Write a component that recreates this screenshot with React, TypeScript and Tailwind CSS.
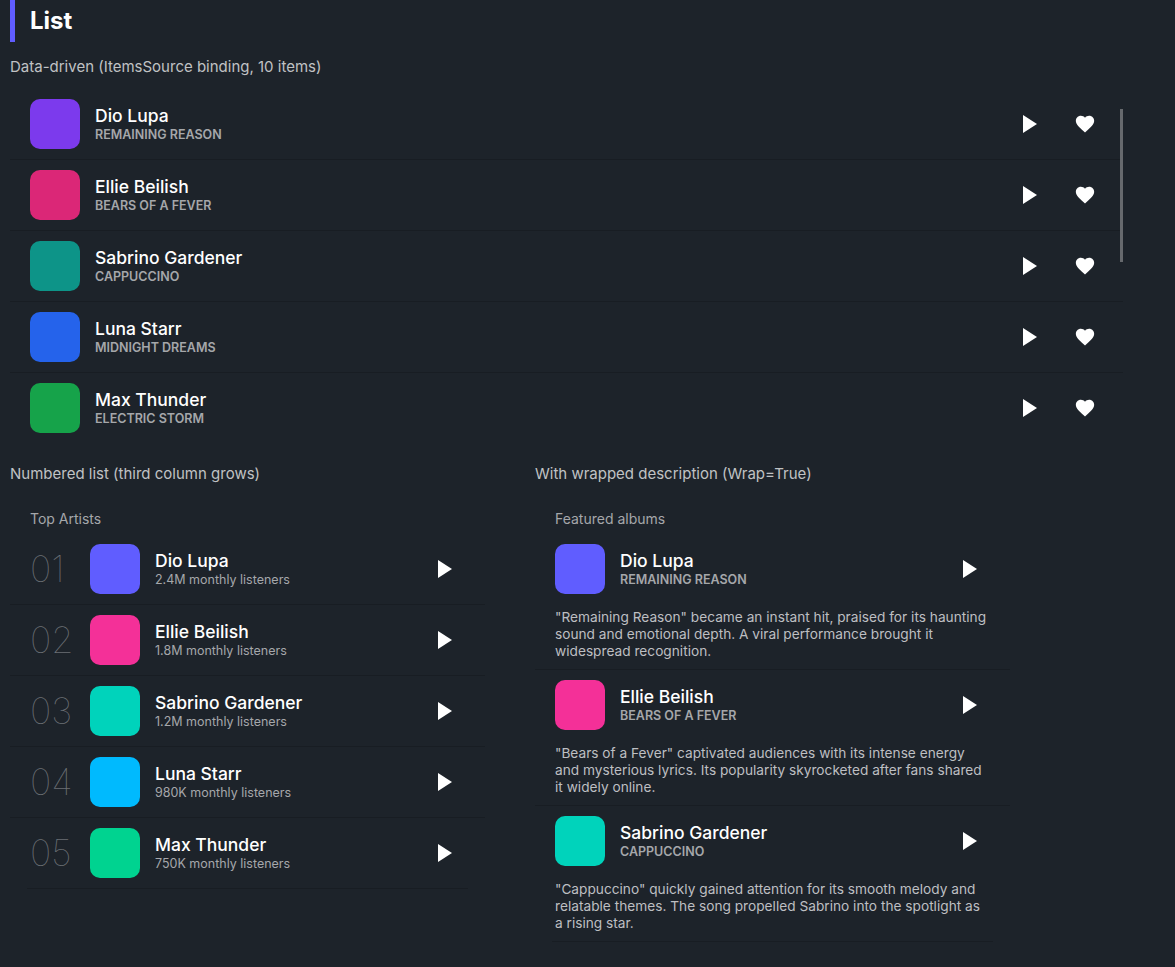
import React from 'react'

const tracks = [
  { name: 'Dio Lupa', song: 'REMAINING REASON', color: 'bg-[#7c3aed]' },
  { name: 'Ellie Beilish', song: 'BEARS OF A FEVER', color: 'bg-[#db2777]' },
  { name: 'Sabrino Gardener', song: 'CAPPUCCINO', color: 'bg-[#0d9488]' },
  { name: 'Luna Starr', song: 'MIDNIGHT DREAMS', color: 'bg-[#2563eb]' },
  { name: 'Max Thunder', song: 'ELECTRIC STORM', color: 'bg-[#16a34a]' },
]

const artists = [
  { no: '01', name: 'Dio Lupa', sub: '2.4M monthly listeners', color: 'bg-[#605dff]' },
  { no: '02', name: 'Ellie Beilish', sub: '1.8M monthly listeners', color: 'bg-[#f43098]' },
  { no: '03', name: 'Sabrino Gardener', sub: '1.2M monthly listeners', color: 'bg-[#00d3bb]' },
  { no: '04', name: 'Luna Starr', sub: '980K monthly listeners', color: 'bg-[#00bafe]' },
  { no: '05', name: 'Max Thunder', sub: '750K monthly listeners', color: 'bg-[#00d390]' },
]

const albums = [
  {
    name: 'Dio Lupa',
    song: 'REMAINING REASON',
    color: 'bg-[#605dff]',
    text: '"Remaining Reason" became an instant hit, praised for its haunting sound and emotional depth. A viral performance brought it widespread recognition.',
  },
  {
    name: 'Ellie Beilish',
    song: 'BEARS OF A FEVER',
    color: 'bg-[#f43098]',
    text: '"Bears of a Fever" captivated audiences with its intense energy and mysterious lyrics. Its popularity skyrocketed after fans shared it widely online.',
  },
  {
    name: 'Sabrino Gardener',
    song: 'CAPPUCCINO',
    color: 'bg-[#00d3bb]',
    text: '"Cappuccino" quickly gained attention for its smooth melody and relatable themes. The song propelled Sabrino into the spotlight as a rising star.',
  },
]

function Play() {
  return (
    <svg width="14" height="18" viewBox="0 0 14 18" className="block shrink-0">
      <polygon points="0,0 14,9 0,18" fill="#fff" />
    </svg>
  )
}

function Heart() {
  return (
    <svg width="22" height="22" viewBox="0 0 24 24" className="block shrink-0">
      <path
        fill="#fff"
        d="M12 21.35l-1.45-1.32C5.4 15.36 2 12.28 2 8.5 2 5.42 4.42 3 7.5 3c1.74 0 3.41.81 4.5 2.09C13.09 3.81 14.76 3 16.5 3 19.58 3 22 5.42 22 8.5c0 3.78-3.4 6.86-8.55 11.54L12 21.35z"
      />
    </svg>
  )
}

function Titles({ name, sub, caps }: { name: string; sub: string; caps?: boolean }) {
  return (
    <div className="-mt-[1px] flex flex-col">
      <div className="text-[17.5px] leading-[21px] font-medium text-white">{name}</div>
      <div className={caps ? 'mt-[1px] text-[12.5px] leading-[15px] font-semibold text-[#a5a7aa]' : 'mt-[1px] text-[12.5px] leading-[15px] text-[#a5a7aa]'}>{sub}</div>
    </div>
  )
}

export default function App() {
  return (
    <div className="min-h-[967px] bg-[#1d232a] pl-[10px] font-['Inter',sans-serif] text-[#a5a7aa]">
      <div className="h-[42px] border-l-[5px] border-[#605dff] pl-[15px]">
        <h1 className="text-[24px] leading-[42px] font-bold text-white">List</h1>
      </div>

      <p className="mt-[15px] text-[15px] leading-[20px] text-[#c0c2c4]">Data-driven (ItemsSource binding, 10 items)</p>

      {/* Data driven list */}
      <div className="relative mt-[12px] h-[354px] w-[1113px] overflow-hidden">
        {tracks.map((t) => (
          <div key={t.name} className="flex h-[71px] items-center border-b border-[#181d23] pl-[20px]">
            <div className={`h-[50px] w-[50px] shrink-0 rounded-[10px] ${t.color}`} />
            <div className="ml-[15px] flex-1">
              <Titles name={t.name} sub={t.song} caps />
            </div>
            <Play />
            <div className="ml-[37px] mr-[27px]">
              <Heart />
            </div>
          </div>
        ))}
        <div className="absolute top-[20px] right-0 h-[153px] w-[3px] bg-[#66696d]" />
      </div>

      <div className="mt-[21px] flex gap-[50px]">
        {/* Numbered list */}
        <div className="w-[475px]">
          <p className="text-[15px] leading-[20px] text-[#c0c2c4]">Numbered list (third column grows)</p>
          <p className="mt-[25px] pl-[20px] text-[14px] leading-[20px] text-[#a5a7aa]">Top Artists</p>
          <div className="mt-[5px]">
            {artists.map((a, i) => (
              <div key={a.no}>
                <div className="flex h-[70px] items-center pl-[20px]">
                  <div className="w-[60px] shrink-0 text-[36px] leading-[40px] font-thin text-[#6b6f74]">{a.no}</div>
                  <div className={`h-[50px] w-[50px] shrink-0 rounded-[10px] ${a.color}`} />
                  <div className="ml-[15px] flex-1">
                    <Titles name={a.name} sub={a.sub} />
                  </div>
                  <div className="mr-[33px]">
                    <Play />
                  </div>
                </div>
                <div className={i === artists.length - 1 ? 'mx-[17px] h-px bg-[#181d23]' : 'h-px bg-[#181d23]'} />
              </div>
            ))}
          </div>
        </div>

        {/* Wrapped description */}
        <div className="w-[475px]">
          <p className="text-[15px] leading-[20px] text-[#c0c2c4]">With wrapped description (Wrap=True)</p>
          <p className="mt-[25px] pl-[20px] text-[14px] leading-[20px] text-[#a5a7aa]">Featured albums</p>
          <div className="mt-[5px]">
            {albums.map((a, i) => (
              <div key={a.name}>
                <div className="px-[20px] pt-[10px] pb-[9px]">
                  <div className="flex items-center">
                    <div className={`h-[50px] w-[50px] shrink-0 rounded-[10px] ${a.color}`} />
                    <div className="ml-[15px] flex-1">
                      <Titles name={a.name} sub={a.song} caps />
                    </div>
                    <div className="mr-[13px]">
                      <Play />
                    </div>
                  </div>
                  <p className="mt-[15px] text-[13.7px] leading-[17px] text-[#bdbfc2]">{a.text}</p>
                </div>
                <div className={i === albums.length - 1 ? 'mx-[17px] h-px bg-[#181d23]' : 'h-px bg-[#181d23]'} />
              </div>
            ))}
          </div>
        </div>
      </div>
    </div>
  )
}
